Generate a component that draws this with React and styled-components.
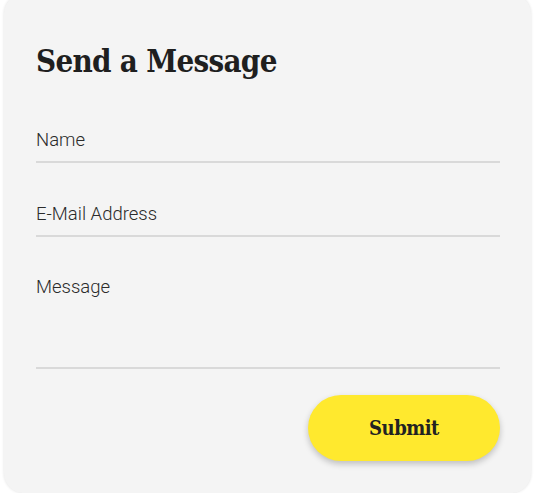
import React from "react";
import styled, { createGlobalStyle } from "styled-components";

const GlobalStyle = createGlobalStyle`
  html, body {
    margin: 0;
    padding: 0;
    background: #ffffff;
  }
  * {
    box-sizing: border-box;
  }
`;

const Card = styled.form`
  width: 527px;
  height: 499px;
  margin: -6px 4px 0 4px;
  padding: 47px 31px 0 32px;
  background: #f4f4f4;
  border-radius: 20px;
  box-shadow: 0 0 3px rgba(0, 0, 0, 0.12);
  display: flex;
  flex-direction: column;
`;

const Title = styled.h2`
  margin: 0 0 38px 0;
  font-family: "DejaVu Serif", "Liberation Serif", serif;
  font-stretch: condensed;
  font-weight: 700;
  font-size: 31px;
  line-height: 40px;
  letter-spacing: -0.7px;
  color: #1f1f1f;
`;

const Fields = styled.div`
  display: flex;
  flex-direction: column;
  gap: 30px;
`;

const Input = styled.input`
  display: block;
  width: 100%;
  height: 44px;
  padding: 0;
  border: none;
  border-bottom: 2px solid #d9d9d9;
  background: transparent;
  font-family: Roboto, "Liberation Sans", sans-serif;
  font-weight: 300;
  font-size: 18.5px;
  color: #2b2b2b;
  outline: none;

  &::placeholder {
    color: #2b2b2b;
    opacity: 1;
  }
`;

const TextArea = styled.textarea`
  display: block;
  width: 100%;
  height: 102px;
  padding: 8px 0 0 0;
  border: none;
  border-bottom: 2px solid #d9d9d9;
  background: transparent;
  resize: none;
  font-family: Roboto, "Liberation Sans", sans-serif;
  font-weight: 300;
  font-size: 18.5px;
  line-height: 24px;
  color: #2b2b2b;
  outline: none;

  &::placeholder {
    color: #2b2b2b;
    opacity: 1;
  }
`;

const Actions = styled.div`
  display: flex;
  justify-content: flex-end;
  margin-top: 26px;
`;

const SubmitButton = styled.button`
  width: 192px;
  height: 66px;
  border: none;
  border-radius: 33px;
  background: #ffe92e;
  box-shadow: 0 3px 6px rgba(0, 0, 0, 0.22);
  font-family: "DejaVu Serif", "Liberation Serif", serif;
  font-stretch: condensed;
  font-weight: 700;
  font-size: 20px;
  letter-spacing: -0.5px;
  color: #222222;
  cursor: pointer;
`;

export default function App() {
  return (
    <>
      <GlobalStyle />
      <Card onSubmit={(e) => e.preventDefault()}>
        <Title>Send a Message</Title>
        <Fields>
          <Input type="text" placeholder="Name" />
          <Input type="email" placeholder="E-Mail Address" />
          <TextArea placeholder="Message" />
        </Fields>
        <Actions>
          <SubmitButton type="submit">Submit</SubmitButton>
        </Actions>
      </Card>
    </>
  );
}
